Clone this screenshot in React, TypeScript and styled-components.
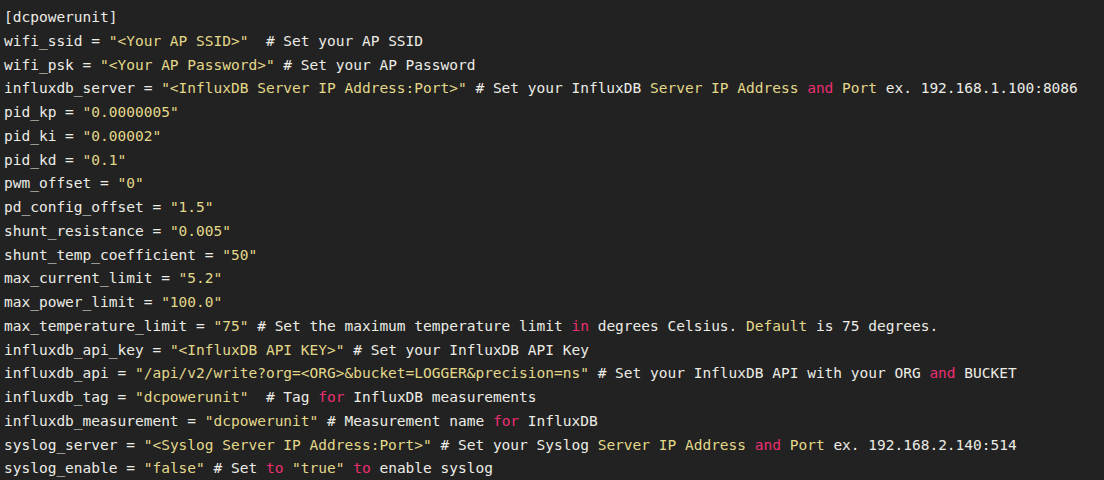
import React from "react";
import styled, { createGlobalStyle } from "styled-components";

const Global = createGlobalStyle`
  html, body { margin: 0; padding: 0; background: #222222; }
  #root { width: 1104px; height: 480px; }
`;

const Block = styled.pre`
  margin: 0;
  width: 1104px;
  height: 480px;
  box-sizing: border-box;
  padding: 6px 0 0 4px;
  background: #222222;
  color: #ecece6;
  font-family: "DejaVu Sans Mono", "Liberation Mono", monospace;
  font-size: 14.5px;
  line-height: 23.75px;
  overflow: hidden;
  white-space: pre;
`;

const Line = styled.div`
  height: 23.75px;
`;

const Str = styled.span`
  color: #e2d88a;
`;

const Kw = styled.span`
  color: #ec2e72;
`;

const Hl = styled.span`
  color: #e2d88a;
`;

type Tok = [string, "t" | "s" | "k" | "h"];

const lines: Tok[][] = [
  [["[dcpowerunit]", "t"]],
  [["wifi_ssid = ", "t"], ['"<Your AP SSID>"', "s"], ["  # Set your AP SSID", "t"]],
  [["wifi_psk = ", "t"], ['"<Your AP Password>"', "s"], [" # Set your AP Password", "t"]],
  [
    ["influxdb_server = ", "t"],
    ['"<InfluxDB Server IP Address:Port>"', "s"],
    [" # Set your InfluxDB ", "t"],
    ["Server IP Address", "h"],
    [" ", "t"],
    ["and", "k"],
    [" ", "t"],
    ["Port", "h"],
    [" ex. 192.168.1.100:8086", "t"],
  ],
  [["pid_kp = ", "t"], ['"0.0000005"', "s"]],
  [["pid_ki = ", "t"], ['"0.00002"', "s"]],
  [["pid_kd = ", "t"], ['"0.1"', "s"]],
  [["pwm_offset = ", "t"], ['"0"', "s"]],
  [["pd_config_offset = ", "t"], ['"1.5"', "s"]],
  [["shunt_resistance = ", "t"], ['"0.005"', "s"]],
  [["shunt_temp_coefficient = ", "t"], ['"50"', "s"]],
  [["max_current_limit = ", "t"], ['"5.2"', "s"]],
  [["max_power_limit = ", "t"], ['"100.0"', "s"]],
  [
    ["max_temperature_limit = ", "t"],
    ['"75"', "s"],
    [" # Set the maximum temperature limit ", "t"],
    ["in", "k"],
    [" degrees Celsius. ", "t"],
    ["Default", "h"],
    [" is 75 degrees.", "t"],
  ],
  [["influxdb_api_key = ", "t"], ['"<InfluxDB API KEY>"', "s"], [" # Set your InfluxDB API Key", "t"]],
  [
    ["influxdb_api = ", "t"],
    ['"/api/v2/write?org=<ORG>&bucket=LOGGER&precision=ns"', "s"],
    [" # Set your InfluxDB API with your ORG ", "t"],
    ["and", "k"],
    [" BUCKET", "t"],
  ],
  [
    ["influxdb_tag = ", "t"],
    ['"dcpowerunit"', "s"],
    ["  # Tag ", "t"],
    ["for", "k"],
    [" InfluxDB measurements", "t"],
  ],
  [
    ["influxdb_measurement = ", "t"],
    ['"dcpowerunit"', "s"],
    [" # Measurement name ", "t"],
    ["for", "k"],
    [" InfluxDB", "t"],
  ],
  [
    ["syslog_server = ", "t"],
    ['"<Syslog Server IP Address:Port>"', "s"],
    [" # Set your Syslog ", "t"],
    ["Server IP Address", "h"],
    [" ", "t"],
    ["and", "k"],
    [" ", "t"],
    ["Port", "h"],
    [" ex. 192.168.2.140:514", "t"],
  ],
  [
    ["syslog_enable = ", "t"],
    ['"false"', "s"],
    [" # Set ", "t"],
    ["to", "k"],
    [" ", "t"],
    ['"true"', "s"],
    [" ", "t"],
    ["to", "k"],
    [" enable syslog", "t"],
  ],
];

function renderTok([text, kind]: Tok, i: number) {
  if (kind === "s") return <Str key={i}>{text}</Str>;
  if (kind === "k") return <Kw key={i}>{text}</Kw>;
  if (kind === "h") return <Hl key={i}>{text}</Hl>;
  return <React.Fragment key={i}>{text}</React.Fragment>;
}

export default function App() {
  return (
    <>
      <Global />
      <Block>
        {lines.map((l, i) => (
          <Line key={i}>{l.map(renderTok)}</Line>
        ))}
      </Block>
    </>
  );
}
